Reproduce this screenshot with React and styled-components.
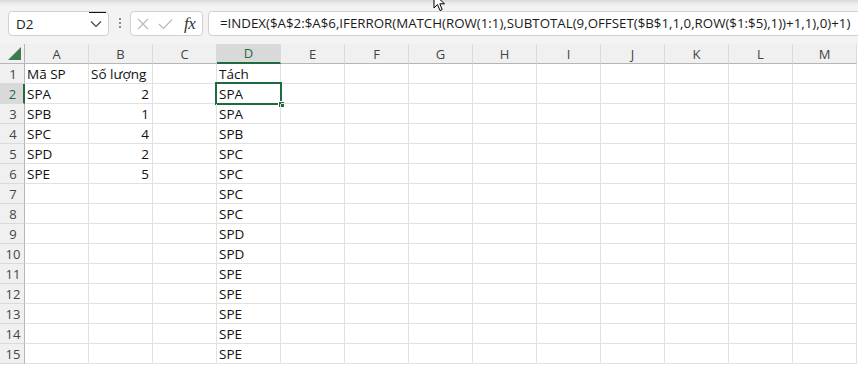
import React from "react";
import styled, { createGlobalStyle } from "styled-components";

const columns = ["A", "B", "C", "D", "E", "F", "G", "H", "I", "J", "K", "L", "M"];

const source = [
  ["Mã SP", "Số lượng"],
  ["SPA", 2],
  ["SPB", 1],
  ["SPC", 4],
  ["SPD", 2],
  ["SPE", 5],
];

const split = ["Tách", "SPA", "SPA", "SPB", "SPC", "SPC", "SPC", "SPC", "SPD", "SPD", "SPE", "SPE", "SPE", "SPE", "SPE"];

const formula =
  "=INDEX($A$2:$A$6,IFERROR(MATCH(ROW(1:1),SUBTOTAL(9,OFFSET($B$1,1,0,ROW($1:$5),1))+1,1),0)+1)";

function App() {
  const rows = Array.from({ length: 15 }, (_, i) => i + 1);

  return (
    <>
      <GlobalStyle />
      <Page>
        <Toolbar>
          <NameBox>
            <span>D2</span>
            <svg width="12" height="8" viewBox="0 0 12 8">
              <path d="M1 1.5 L6 6.5 L11 1.5" fill="none" stroke="#444" strokeWidth="1.2" />
            </svg>
            <NameMark />
          </NameBox>
          <Grip>
            <i />
            <i />
            <i />
          </Grip>
          <FnBox>
            <svg width="12" height="12" viewBox="0 0 12 12">
              <path d="M1 1 L11 11 M11 1 L1 11" stroke="#b8b8b8" strokeWidth="1.1" />
            </svg>
            <svg width="15" height="12" viewBox="0 0 15 12">
              <path d="M1 6 L5.5 10.5 L14 1.5" fill="none" stroke="#b8b8b8" strokeWidth="1.1" />
            </svg>
            <Fx>fx</Fx>
          </FnBox>
          <FormulaInput>{formula}</FormulaInput>
        </Toolbar>

        <Sheet>
          <Corner>
            <svg width="13" height="13" viewBox="0 0 13 13">
              <path d="M13 0 L13 13 L0 13 Z" fill="#3f7a4f" />
            </svg>
          </Corner>
          {columns.map(c => (
            <ColHead key={c} $active={c === "D"}>
              {c}
            </ColHead>
          ))}

          {rows.map(r => (
            <React.Fragment key={r}>
              <RowHead $active={r === 2}>{r}</RowHead>
              {columns.map(c => {
                let value = "";
                let num = false;
                if (c === "A" && source[r - 1]) value = source[r - 1][0];
                if (c === "B" && source[r - 1]) {
                  value = source[r - 1][1];
                  num = typeof value === "number";
                }
                if (c === "D" && split[r - 1]) value = split[r - 1];
                return (
                  <Cell key={c} $num={num}>
                    {value}
                    {c === "D" && r === 2 && (
                      <Selection>
                        <Handle />
                      </Selection>
                    )}
                  </Cell>
                );
              })}
            </React.Fragment>
          ))}
        </Sheet>

        <Pointer width="14" height="20" viewBox="0 0 14 20">
          <path
            d="M1 1 L1 15 L4.5 11.5 L7 17.5 L9.2 16.6 L6.8 10.8 L11.5 10.8 Z"
            fill="#fff"
            stroke="#000"
            strokeWidth="1"
            strokeLinejoin="round"
          />
        </Pointer>
      </Page>
    </>
  );
}

const GlobalStyle = createGlobalStyle`
  body {
    margin: 0;
    font-family: "Open Sans", "Noto Sans", sans-serif;
    background: #fff;
  }
`;

const Page = styled("div")`
  position: relative;
  width: 858px;
  height: 366px;
  overflow: hidden;
  background: #fff;
`;

const Toolbar = styled("div")`
  display: flex;
  align-items: flex-start;
  height: 44px;
  box-sizing: border-box;
  padding: 11px 0 0 8px;
  background: linear-gradient(#d9d9d9 0, #e9e9e9 3px, #f3f3f3 6px, #f3f3f3 100%);
`;

const NameBox = styled("div")`
  position: relative;
  flex: none;
  display: flex;
  align-items: center;
  justify-content: space-between;
  width: 101px;
  height: 25px;
  box-sizing: border-box;
  padding: 0 6px 0 7px;
  background: #fff;
  border: 1px solid #d1d1d1;
  border-radius: 4px;
  font-size: 13.5px;
  color: #222;
`;

const NameMark = styled("div")`
  position: absolute;
  top: 0;
  right: 2px;
  width: 17px;
  height: 1px;
  background: #111;
`;

const Grip = styled("div")`
  flex: none;
  display: flex;
  flex-direction: column;
  align-items: center;
  gap: 2px;
  width: 21px;
  padding-top: 7px;

  i {
    width: 2px;
    height: 2px;
    background: #8a8a8a;
  }
`;

const FnBox = styled("div")`
  flex: none;
  display: flex;
  align-items: center;
  gap: 9px;
  width: 73px;
  height: 25px;
  box-sizing: border-box;
  padding: 0 5px 0 6px;
  background: #fff;
  border: 1px solid #d1d1d1;
  border-radius: 4px;
`;

const Fx = styled("span")`
  margin-left: 2px;
  font-family: "Liberation Serif", serif;
  font-style: italic;
  font-size: 17px;
  color: #333;
  letter-spacing: -0.5px;
`;

const FormulaInput = styled("div")`
  flex: none;
  width: 700px;
  height: 25px;
  margin-left: 5px;
  box-sizing: border-box;
  padding: 0 0 0 11px;
  background: #fff;
  border: 1px solid #d1d1d1;
  border-radius: 4px;
  font-size: 13.3px;
  line-height: 23px;
  color: #1a1a1a;
  white-space: nowrap;
`;

const Sheet = styled("div")`
  display: grid;
  grid-template-columns: 25px repeat(13, 64px);
  grid-auto-rows: 20px;
`;

const Corner = styled("div")`
  display: flex;
  align-items: flex-end;
  justify-content: flex-end;
  padding: 0 3px 3px 0;
  background: #f0f0f0;
  border-right: 1px solid #b6b6b6;
  border-bottom: 1px solid #b6b6b6;
`;

const ColHead = styled("div")`
  display: flex;
  align-items: center;
  justify-content: center;
  background: ${p => (p.$active ? "#d9d9d9" : "#f0f0f0")};
  color: ${p => (p.$active ? "#1e6b41" : "#444")};
  border-right: 1px solid #dadada;
  border-bottom: ${p => (p.$active ? "2px solid #1e6b41" : "1px solid #b6b6b6")};
  font-size: 13px;
`;

const RowHead = styled("div")`
  display: flex;
  align-items: center;
  justify-content: center;
  padding-left: 2px;
  background: ${p => (p.$active ? "#d9d9d9" : "#f0f0f0")};
  color: ${p => (p.$active ? "#1e6b41" : "#444")};
  border-right: ${p => (p.$active ? "2px solid #1e6b41" : "1px solid #b6b6b6")};
  border-bottom: 1px solid #dadada;
  font-size: 13px;
`;

const Cell = styled("div")`
  position: relative;
  display: flex;
  align-items: flex-end;
  justify-content: ${p => (p.$num ? "flex-end" : "flex-start")};
  padding: 0 3px 0 2px;
  border-right: 1px solid #e1e1e1;
  border-bottom: 1px solid #e1e1e1;
  font-size: 13.5px;
  color: #111;
  white-space: nowrap;
`;

const Selection = styled("div")`
  position: absolute;
  top: -2px;
  left: -2px;
  right: -2px;
  bottom: -2px;
  border: 2px solid #1e6b41;
  pointer-events: none;
`;

const Handle = styled("div")`
  position: absolute;
  right: -5px;
  bottom: -5px;
  width: 5px;
  height: 5px;
  background: #1e6b41;
  border: 1px solid #fff;
`;

const Pointer = styled("svg")`
  position: absolute;
  top: -7px;
  left: 433px;
`;

export default App;
